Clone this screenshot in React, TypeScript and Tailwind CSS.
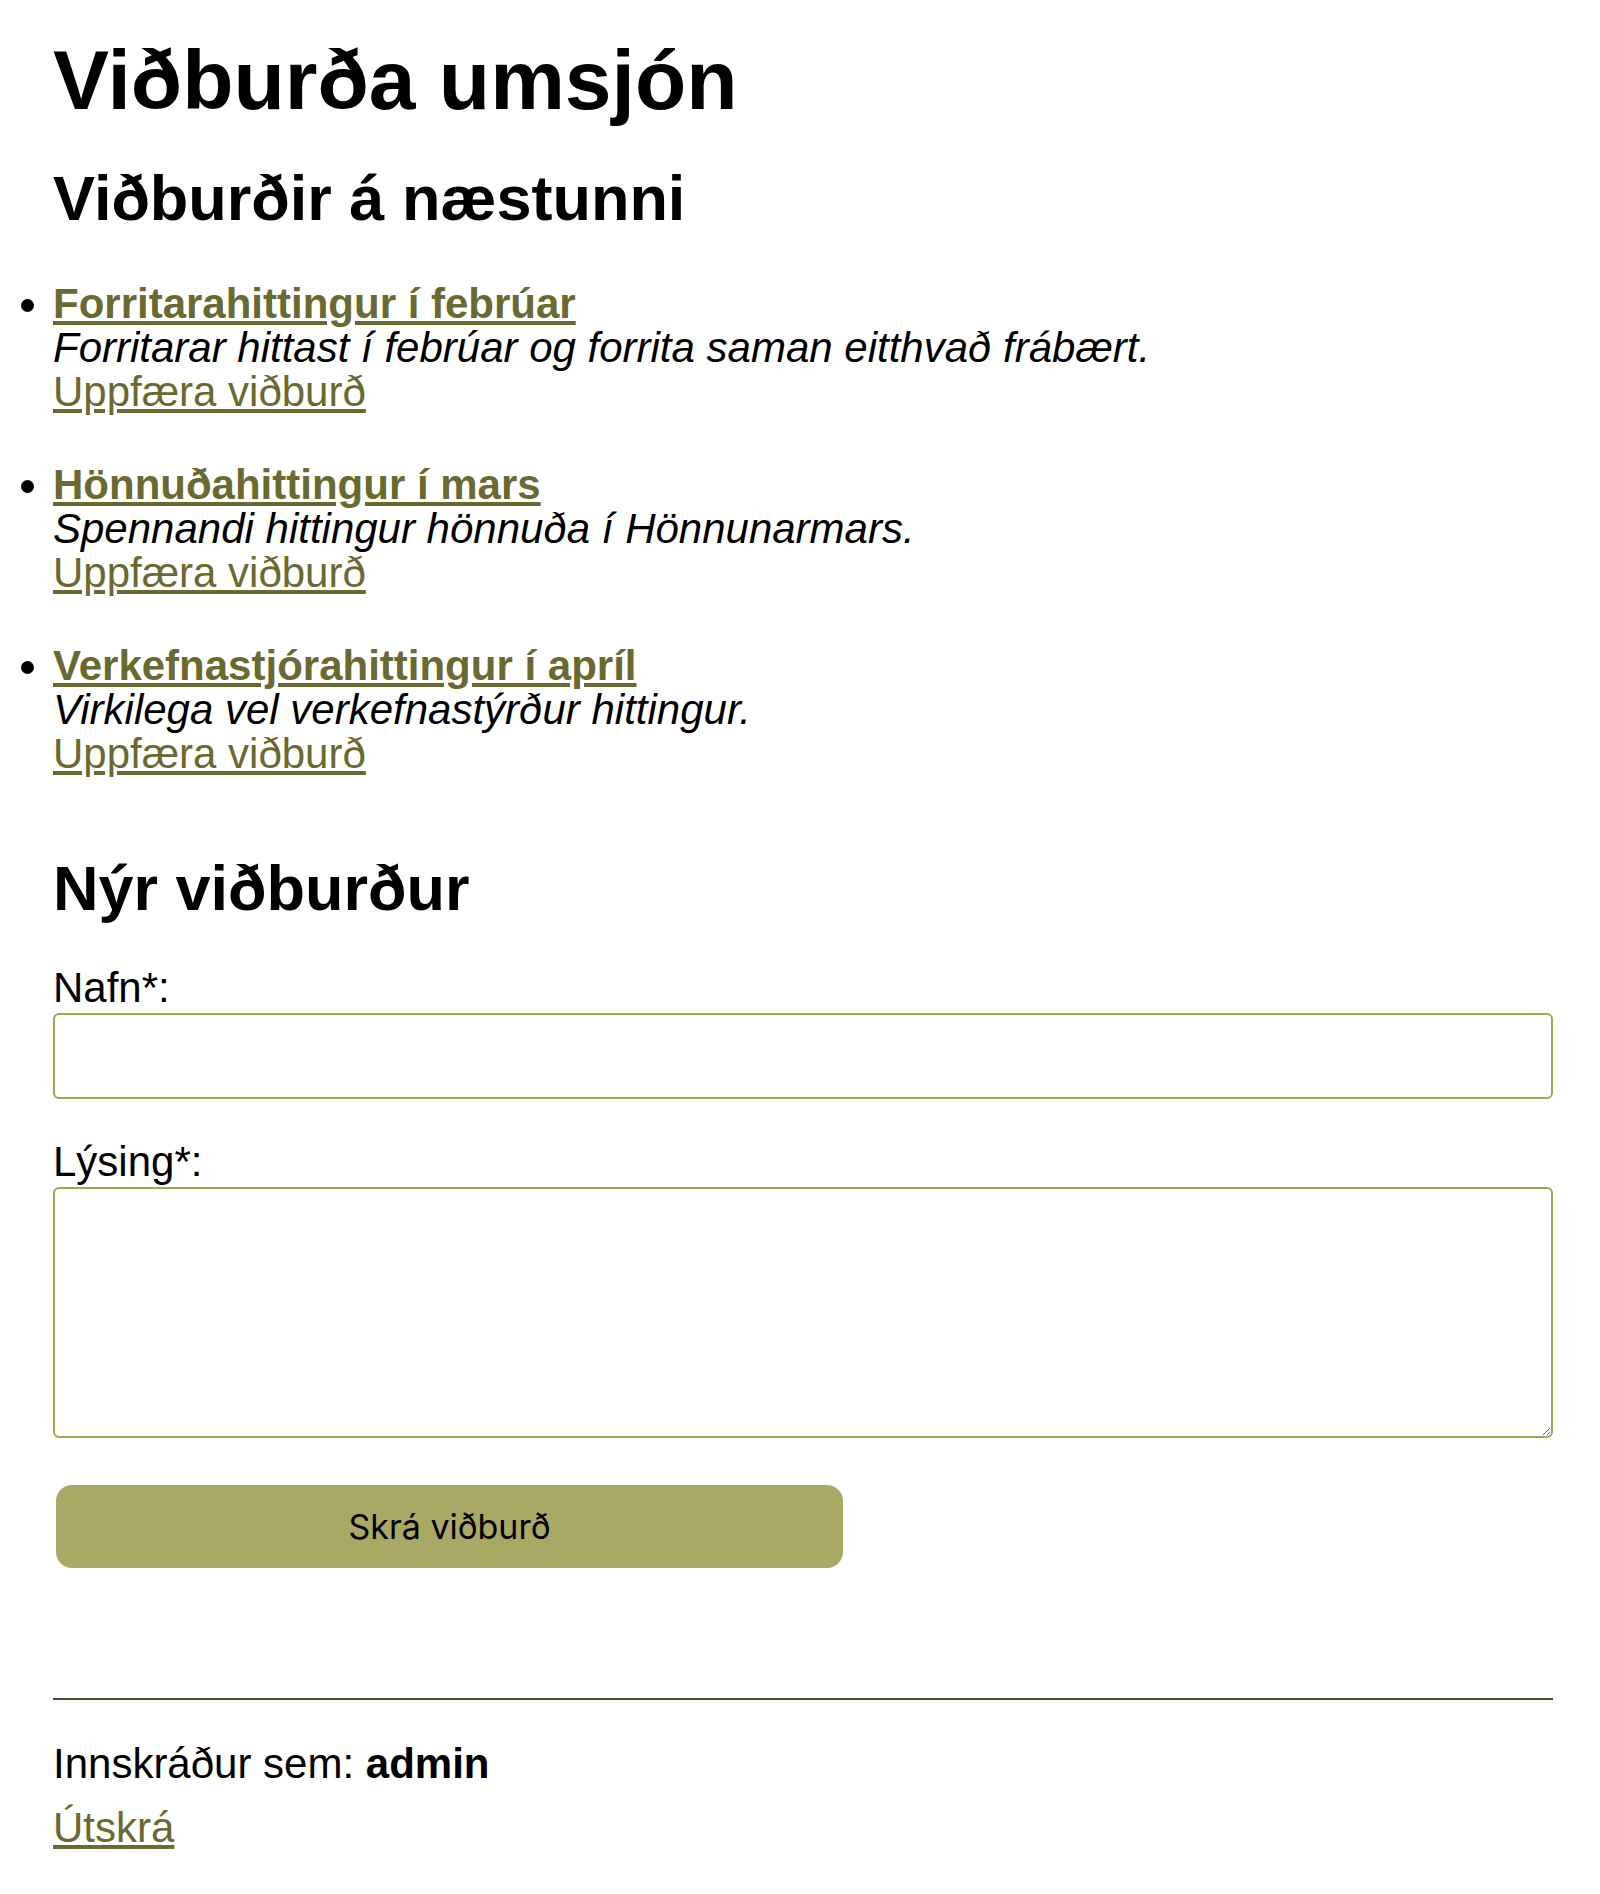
import React from "react";

const events = [
  {
    title: "Forritarahittingur í febrúar",
    desc: "Forritarar hittast í febrúar og forrita saman eitthvað frábært.",
  },
  {
    title: "Hönnuðahittingur í mars",
    desc: "Spennandi hittingur hönnuða í Hönnunarmars.",
  },
  {
    title: "Verkefnastjórahittingur í apríl",
    desc: "Virkilega vel verkefnastýrður hittingur.",
  },
];

export default function App() {
  return (
    <div className="bg-white min-h-[1894px] w-full font-['Liberation_Sans',Arial,sans-serif] text-black text-[42px]">
      <div className="ml-[53px] mr-[47px] pt-[38px]">
        <h1 className="text-[84px] leading-[84px] font-bold">Viðburða umsjón</h1>
        <h2 className="mt-[45px] text-[63px] leading-[63px] font-bold">Viðburðir á næstunni</h2>
        <ul className="mt-[52px] list-disc flex flex-col gap-[49px]">
          {events.map((e) => (
            <li key={e.title} className="leading-[44px]">
              <a href="#" className="block w-fit font-bold text-[#6a692f] underline">
                {e.title}
              </a>
              <p className="italic">{e.desc}</p>
              <a href="#" className="block w-fit text-[#6a692f] underline">
                Uppfæra viðburð
              </a>
            </li>
          ))}
        </ul>
        <h2 className="mt-[81px] text-[63px] leading-[63px] font-bold">Nýr viðburður</h2>
        <form className="mt-[46px] flex flex-col" onSubmit={(ev) => ev.preventDefault()}>
          <label className="block leading-[44px]">Nafn*:</label>
          <input
            type="text"
            className="mt-[3px] h-[86px] w-full border-2 border-[#a4a64c] rounded-[6px] bg-white outline-none px-3 text-[42px]"
          />
          <label className="mt-[41px] block leading-[44px]">Lýsing*:</label>
          <textarea className="mt-[3px] h-[251px] w-full border-2 border-[#a4a64c] rounded-[6px] bg-white outline-none px-3 text-[42px]" />
          <button
            type="submit"
            className="mt-[47px] ml-[3px] h-[83px] w-[787px] rounded-[16px] bg-[#aaa865] text-black text-[34px] font-['Inter','Liberation_Sans',sans-serif]"
          >
            Skrá viðburð
          </button>
        </form>
        <hr className="mt-[130px] border-0 h-[2px] bg-[#4b4a2c]" />
        <p className="mt-[42px] leading-[44px]">
          Innskráður sem: <strong className="font-bold">admin</strong>
        </p>
        <a href="#" className="mt-[20px] block w-fit leading-[44px] text-[#6a692f] underline">
          Útskrá
        </a>
      </div>
    </div>
  );
}
